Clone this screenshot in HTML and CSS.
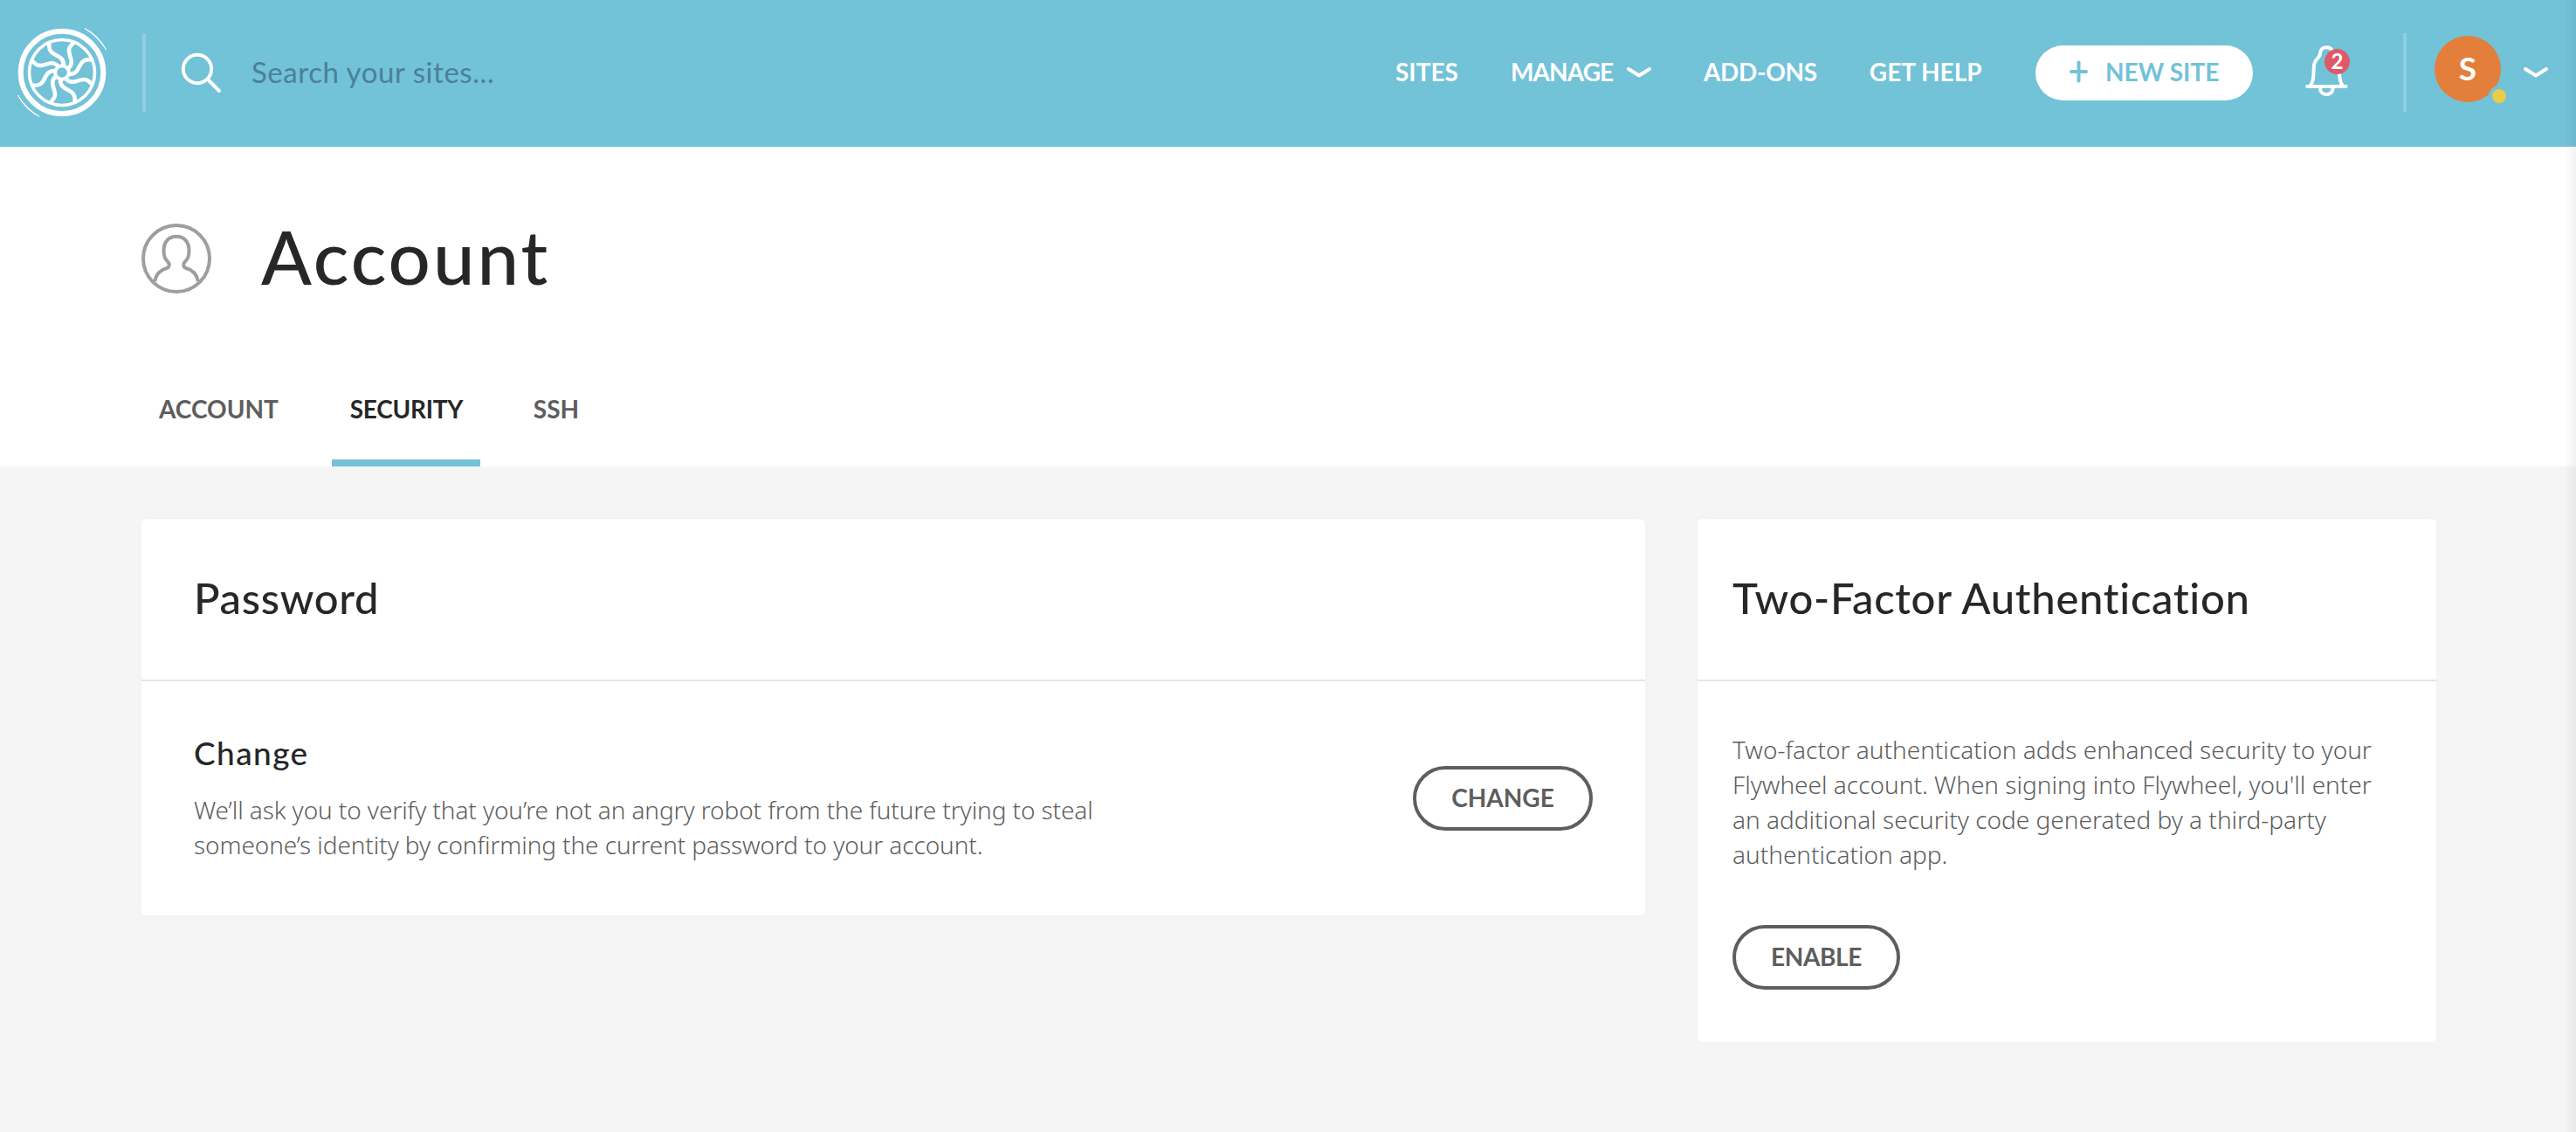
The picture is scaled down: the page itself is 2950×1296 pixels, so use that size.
FILE: index.html
```html
<!DOCTYPE html>
<html lang="en">
<head>
<meta charset="utf-8">
<title>Account</title>
<link rel="stylesheet" href="styles.css">
</head>
<body>
<header class="topbar">
  <a class="logo">
    <svg width="108" height="108" viewBox="-54 -54 108 108" fill="none" stroke="#fff">
      <defs><path id="spoke" d="M-14.500 -34C-17 -15.500 2 -24 2 -8"/></defs>
      <circle r="47.300" stroke-width="6"/>
      <circle r="37.500" stroke-width="3.600"/>
      <circle r="7.800" stroke-width="4"/>
      <g stroke-width="4.600">
        <use href="#spoke"/>
        <use href="#spoke" transform="rotate(45)"/>
        <use href="#spoke" transform="rotate(90)"/>
        <use href="#spoke" transform="rotate(135)"/>
        <use href="#spoke" transform="rotate(180)"/>
        <use href="#spoke" transform="rotate(225)"/>
        <use href="#spoke" transform="rotate(270)"/>
        <use href="#spoke" transform="rotate(315)"/>
      </g>
      <g fill="#fff" stroke-width="1" stroke-linejoin="round">
        <path d="M26 -50.500A54 54 0 0 1 50.500 -26A76 76 0 0 0 26 -50.500Z"/>
        <path d="M-26 50.500A54 54 0 0 1 -50.500 26A76 76 0 0 0 -26 50.500Z"/>
      </g>
    </svg>
  </a>
  <span class="divider"></span>
  <svg class="search-icon" width="48" height="48" viewBox="0 0 48 48" fill="none" stroke="#fff" stroke-width="4" stroke-linecap="round"><circle cx="20" cy="20" r="16.200"/><path d="M32 32L45 45"/></svg>
  <span class="search-text">Search your sites...</span>
  <nav class="nav">
    <a>SITES</a>
    <a class="manage">MANAGE</a>
    <svg class="nav-chevron" width="30" height="14" viewBox="0 0 30 14" fill="none" stroke="#fff" stroke-width="4" stroke-linecap="round" stroke-linejoin="round"><path d="M3 3L15 10.500L27 3"/></svg>
    <a class="addons">ADD-ONS</a>
    <a class="help">GET HELP</a>
  </nav>
  <a class="new-site">
    <svg width="21" height="26" viewBox="0 0 21 26" stroke="#72c2d8" stroke-width="4" stroke-linecap="round"><path d="M2 13H19M10.500 2.500V23.500"/></svg>
    <span>NEW SITE</span>
  </a>
  <span class="bell">
    <svg width="49" height="62" viewBox="0 0 49 62" fill="none" stroke="#fff" stroke-width="4" stroke-linecap="round" stroke-linejoin="round"><path d="M2.200 49H46.500M6 48C11 42 9 32 10 24C11 16.500 17 17 17 11C17 6.500 20 4.200 24.300 4.200C28.600 4.200 31.600 6.500 31.600 11C31.600 17 37.600 16.500 38.600 24C39.600 32 37.600 42 42.600 48M17 51C17 60.500 31.600 60.500 31.600 51"/></svg>
    <span class="badge">2</span>
  </span>
  <span class="divider"></span>
  <span class="avatar">S<span class="status"></span></span>
  <svg class="user-chevron" width="30" height="14" viewBox="0 0 30 14" fill="none" stroke="#fff" stroke-width="4" stroke-linecap="round" stroke-linejoin="round"><path d="M3 3L15 10.500L27 3"/></svg>
</header>

<section class="page-head">
  <div class="title-row">
    <svg width="80" height="80" viewBox="0 0 80 80" fill="none" stroke="#9f9e9d" stroke-width="4"><circle cx="40" cy="40" r="38"/><path d="M15.300 66C17 57 23 52.500 29 51C32.500 50 32.300 45.500 30 43.500C26.500 40.500 25.500 36 25.500 31C25.500 21 31 14.700 40 14.700C49 14.700 54.500 21 54.500 31C54.500 36 53.500 40.500 50 43.500C47.700 45.500 47.500 50 51 51C57 52.500 63 57 64.700 66"/></svg>
    <h1>Account</h1>
  </div>
  <div class="tabs">
    <a class="tab">ACCOUNT</a>
    <a class="tab active">SECURITY</a>
    <a class="tab">SSH</a>
  </div>
</section>

<main class="content">
  <section class="card password">
    <h2>Password</h2>
    <div class="card-body">
      <div>
        <h3>Change</h3>
        <p>We’ll ask you to verify that you’re not an angry robot from the future trying to steal<br>someone’s identity by confirming the current password to your account.</p>
      </div>
      <button class="change">CHANGE</button>
    </div>
  </section>
  <section class="card two-factor">
    <h2>Two-Factor Authentication</h2>
    <div class="card-body">
      <p>Two-factor authentication adds enhanced security to your<br>Flywheel account. When signing into Flywheel, you'll enter<br>an additional security code generated by a third-party<br>authentication app.</p>
      <button class="enable">ENABLE</button>
    </div>
  </section>
</main>
<div class="edge-shade"></div>
</body>
</html>
```
FILE: styles.css
```css
* { box-sizing: border-box; }

body {
  margin: 0;
  min-height: 1296px;
  background: #f5f5f5;
  color: #262727;
  font-family: Lato, "Noto Sans", sans-serif;
}

h1, h2, h3, p { margin: 0; font-weight: 400; }
svg { display: block; flex: none; }

.topbar {
  display: flex;
  align-items: center;
  height: 168px;
  padding-left: 17px;
  background: #72c2d8;
  color: #fff;
}

.logo { margin: 0 38px 2px 0; }

.divider {
  flex: none;
  width: 4px;
  height: 90px;
  margin-bottom: 2px;
  background: rgba(255, 255, 255, 0.22);
}

.search-icon { margin: 0 34px 2px 39px; }

.search-text {
  padding-bottom: 4px;
  color: #4a809a;
  font-size: 33px;
  line-height: 40px;
  letter-spacing: 0.55px;
}

.nav {
  display: flex;
  align-items: center;
  width: 733px;
  margin-left: auto;
  font-size: 28px;
  font-weight: 700;
  line-height: 28px;
}

.nav a { padding-bottom: 4px; white-space: nowrap; }
.nav .manage { width: 115px; margin-left: 60px; letter-spacing: -0.9px; }
.nav-chevron { margin: 0 0 2px 17px; }
.nav .addons { margin-left: 59px; letter-spacing: -0.3px; }
.nav .help { margin-left: 60px; }

.new-site {
  display: flex;
  flex: none;
  align-items: center;
  width: 249px;
  height: 63px;
  margin-bottom: 1px;
  padding-left: 39px;
  gap: 20px;
  border-radius: 32px;
  background: #fff;
  color: #72c2d8;
  font-size: 28px;
  font-weight: 700;
  line-height: 28px;
  white-space: nowrap;
}

.new-site svg { margin-bottom: 3px; }
.new-site span { padding-bottom: 3px; }

.bell {
  position: relative;
  margin: 0 63px 6px 60px;
}

.badge {
  position: absolute;
  top: 6px;
  left: 22px;
  width: 29px;
  height: 29px;
  border-radius: 50%;
  background: #df5a69;
  font-size: 24px;
  font-weight: 700;
  line-height: 28px;
  text-align: center;
}

.avatar {
  position: relative;
  width: 76px;
  height: 76px;
  margin: 0 25px 10px 32px;
  border-radius: 50%;
  background: #e37f3b;
  font-size: 37px;
  font-weight: 700;
  line-height: 74px;
  text-align: center;
}

.status {
  position: absolute;
  top: 57px;
  left: 62px;
  width: 24px;
  height: 24px;
  border: 4px solid #72c2d8;
  border-radius: 50%;
  background: #e9cc47;
}

.user-chevron { margin: 0 31px 2px 0; }

.page-head {
  display: flex;
  flex-direction: column;
  justify-content: space-between;
  height: 366px;
  padding: 88px 162px 0;
  background: #fff;
}

.title-row { display: flex; align-items: center; gap: 57px; }

h1 {
  padding-bottom: 6px;
  font-size: 85px;
  font-weight: 500;
  line-height: 72px;
  letter-spacing: 3px;
}

.tabs { display: flex; gap: 41px; }

.tab {
  height: 92px;
  padding: 12px 20px 0;
  color: #5d5e5d;
  font-size: 28px;
  font-weight: 700;
  line-height: 28px;
}

.tab.active {
  width: 170px;
  padding-left: 21px;
  border-bottom: 8px solid #72c2d8;
  color: #262727;
  letter-spacing: -0.3px;
}

.content {
  display: grid;
  grid-template-columns: 1722px 846px;
  align-items: start;
  gap: 60px;
  padding: 60px 162px;
}

.card {
  border-radius: 6px;
  background: #fff;
  box-shadow: 0 0 10px rgba(0, 0, 0, 0.02);
}

h2 {
  height: 186px;
  padding: 61px 60px 0;
  border-bottom: 2px solid #e5e5e5;
  font-size: 49px;
  font-weight: 500;
  line-height: 58px;
  letter-spacing: 0.7px;
}

.two-factor h2 { padding-left: 40px; }

h3 {
  margin-bottom: 23px;
  font-size: 37px;
  font-weight: 500;
  line-height: 44px;
  letter-spacing: 1.4px;
}

p {
  color: #5d5e5d;
  font: 300 28px/40px "Noto Sans", sans-serif;
  white-space: nowrap;
}

.password .card-body {
  display: flex;
  align-items: center;
  justify-content: space-between;
  height: 268px;
  padding: 0 60px 1px;
}

.password p { letter-spacing: -0.1px; }

.two-factor .card-body { padding: 58px 40px 60px; }

button {
  display: block;
  height: 74px;
  padding: 0 0 2px;
  border: 4px solid #5d5e5d;
  border-radius: 37px;
  background: none;
  color: #5d5e5d;
  font: 700 28px/28px Lato, sans-serif;
}

.change { width: 206px; }
.enable { width: 192px; margin-top: 61px; letter-spacing: -0.4px; }

/* Soft shade along the right edge of the window */
.edge-shade {
  position: absolute;
  top: 0;
  right: 0;
  width: 14px;
  height: 1296px;
  background: linear-gradient(to right, transparent, rgba(0, 0, 0, 0.05));
}
```
